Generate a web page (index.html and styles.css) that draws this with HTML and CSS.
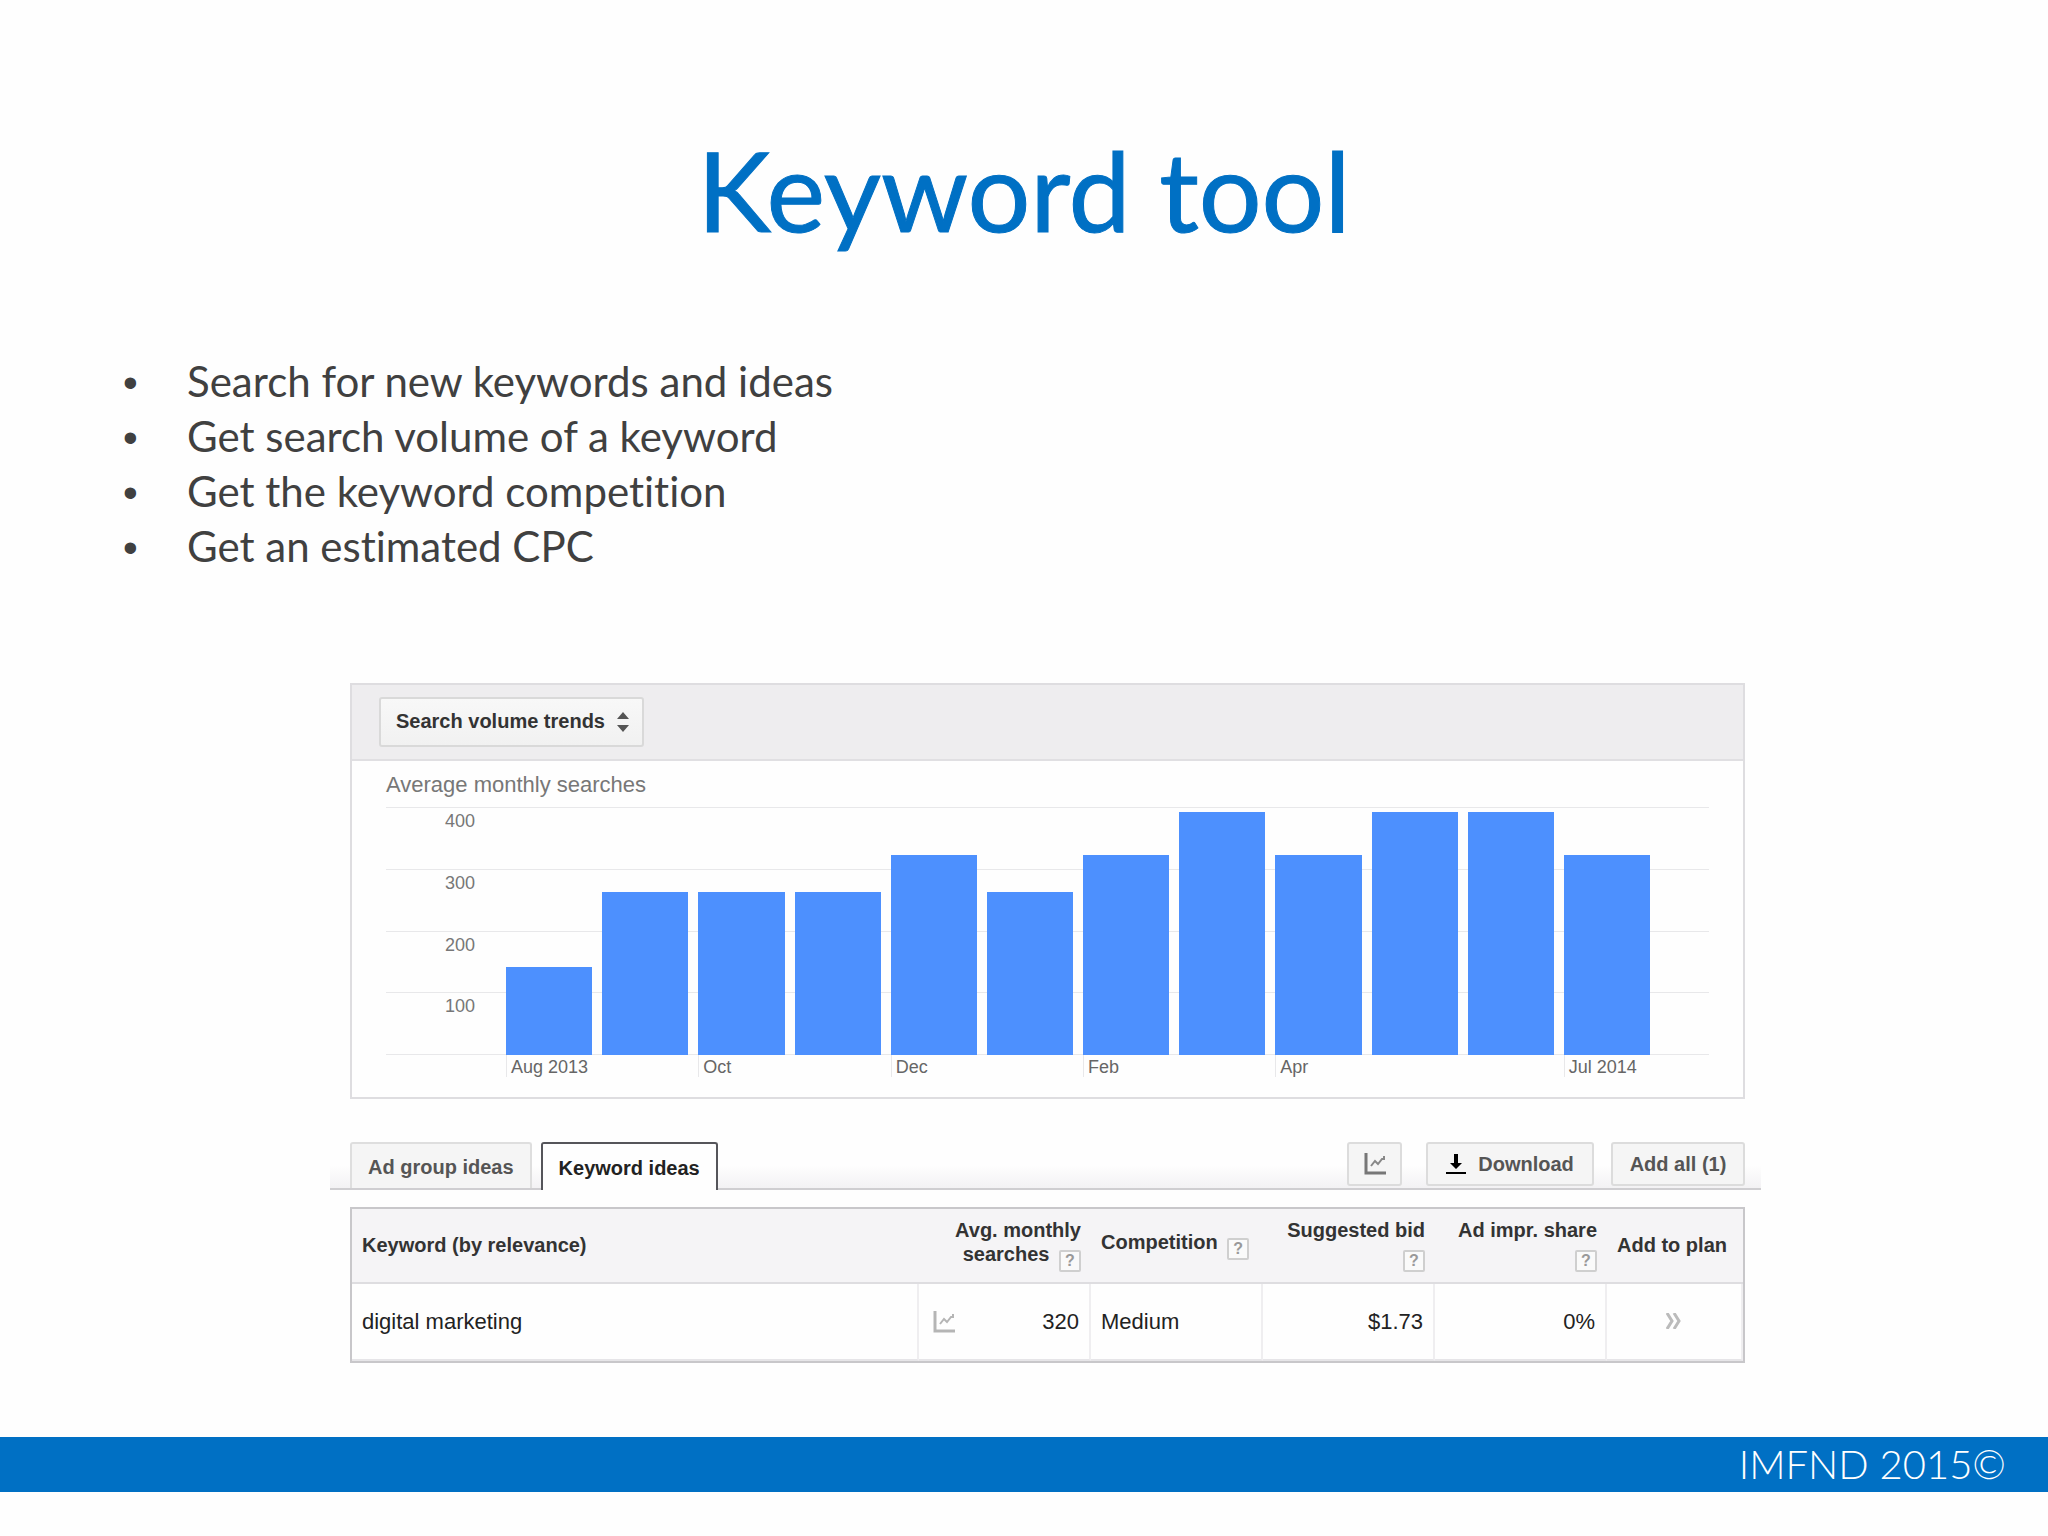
FILE: index.html
```html
<!DOCTYPE html>
<html lang="en">
<head>
    <meta charset="UTF-8">
    <meta name="viewport" content="width=device-width, initial-scale=1.0">
    <title>Keyword tool</title>
    <link rel="stylesheet" href="styles.css">
</head>
<body>

<main class="slide">
    <h1 class="title">Keyword tool</h1>

    <ul class="points">
        <li>Search for new keywords and ideas</li>
        <li>Get search volume of a keyword</li>
        <li>Get the keyword competition</li>
        <li>Get an estimated CPC</li>
    </ul>

    <div class="tool">
        <!-- Chart -->
        <section class="panel">
            <div class="panel-head">
                <div class="picker">
                    <select class="picker-select" aria-label="Chart type">
                        <option>Search volume trends</option>
                    </select>
                    <svg class="picker-arrows" width="12" height="20" viewBox="0 0 12 20">
                        <path d="M6 0L12 7H0zM0 13H12L6 20z" fill="#555"/>
                    </svg>
                </div>
            </div>
            <div class="chart">
                <h2 class="chart-title">Average monthly searches</h2>
                <div class="plot">
                    <div class="grid">
                        <span>400</span>
                        <span>300</span>
                        <span>200</span>
                        <span>100</span>
                    </div>
                    <div class="bars">
                        <div class="bar" style="height: 35.6%"></div>
                        <div class="bar" style="height: 65.6%"></div>
                        <div class="bar" style="height: 65.6%"></div>
                        <div class="bar" style="height: 65.6%"></div>
                        <div class="bar" style="height: 80.8%"></div>
                        <div class="bar" style="height: 65.6%"></div>
                        <div class="bar" style="height: 80.8%"></div>
                        <div class="bar" style="height: 98%"></div>
                        <div class="bar" style="height: 80.8%"></div>
                        <div class="bar" style="height: 98%"></div>
                        <div class="bar" style="height: 98%"></div>
                        <div class="bar" style="height: 80.8%"></div>
                    </div>
                </div>
                <div class="months">
                    <span class="month">Aug 2013</span>
                    <span></span>
                    <span class="month">Oct</span>
                    <span></span>
                    <span class="month">Dec</span>
                    <span></span>
                    <span class="month">Feb</span>
                    <span></span>
                    <span class="month">Apr</span>
                    <span></span>
                    <span></span>
                    <span class="month">Jul 2014</span>
                </div>
            </div>
        </section>

        <!-- Tabs and actions -->
        <div class="tabbar">
            <button type="button" class="tab">Ad group ideas</button>
            <button type="button" class="tab active">Keyword ideas</button>
            <div class="actions">
                <button type="button" class="button button-chart" aria-label="Show chart">
                    <svg width="22" height="22" viewBox="0 0 22 22" fill="none">
                        <path d="M2 0V20H22" stroke="#777" stroke-width="3"/>
                        <path d="M7 13L11 8L14 11L18 6H20V3" stroke="#888" stroke-width="2"/>
                    </svg>
                </button>
                <button type="button" class="button button-download">
                    <svg width="20" height="20" viewBox="0 0 20 20">
                        <path d="M8 0H12V9H16L10 15L4 9H8zM0 18H20V20H0z" fill="#000"/>
                    </svg>
                    Download
                </button>
                <button type="button" class="button button-add">Add all (1)</button>
            </div>
        </div>

        <!-- Results -->
        <table class="results">
            <colgroup>
                <col class="col-keyword">
                <col class="col-data">
                <col class="col-data">
                <col class="col-data">
                <col class="col-data">
                <col class="col-plan">
            </colgroup>
            <thead>
                <tr>
                    <th>Keyword (by relevance)</th>
                    <th class="num">Avg. monthly searches <button type="button" class="help">?</button></th>
                    <th>Competition <button type="button" class="help">?</button></th>
                    <th class="num">Suggested bid <button type="button" class="help">?</button></th>
                    <th class="num">Ad impr. share <button type="button" class="help">?</button></th>
                    <th>Add to plan</th>
                </tr>
            </thead>
            <tbody>
                <tr>
                    <td>digital marketing</td>
                    <td>
                        <div class="volume">
                            <svg width="22" height="22" viewBox="0 0 22 22" fill="none">
                                <path d="M2 0V20H22" stroke="#b5b5b5" stroke-width="3"/>
                                <path d="M7 13L11 8L14 11L18 6H20V3" stroke="#b5b5b5" stroke-width="2"/>
                            </svg>
                            320
                        </div>
                    </td>
                    <td>Medium</td>
                    <td class="num">$1.73</td>
                    <td class="num">0%</td>
                    <td class="plan">
                        <button type="button" class="add" aria-label="Add to plan">
                            <svg width="16" height="16" viewBox="0 0 16 16" fill="none" stroke="#bbb" stroke-width="3">
                                <path d="M1 0L6 8L1 16M8 0L13 8L8 16"/>
                            </svg>
                        </button>
                    </td>
                </tr>
            </tbody>
        </table>
    </div>
</main>

<footer class="footer">IMFND 2015©</footer>

</body>
</html>
```

FILE: styles.css
```css
* {
    box-sizing: border-box;
}
body {
    margin: 0;
    min-height: 100vh;
    display: flex;
    flex-direction: column;
    background: #fefefe;
    color: #404040;
    font-family: "Liberation Sans", Arial, sans-serif;
}
button, select {
    font-family: inherit;
    cursor: pointer;
}
.title {
    margin: 0;
    padding-top: 117px;
    font-family: Lato, Calibri, sans-serif;
    font-size: 111px;
    font-weight: normal;
    line-height: 144px;
    text-align: center;
    color: #0070c4;
    -webkit-text-stroke: 1px #0070c4;
}
.points {
    margin: 93px 0 0;
    padding: 0 0 0 187px;
    list-style: none;
    font-family: Lato, Calibri, sans-serif;
    font-size: 42px;
    line-height: 55px;
    font-variant-ligatures: none;
}
.points li::before {
    content: "•";
    display: inline-block;
    width: 64px;
    margin-left: -64px;
    font-family: "Liberation Sans", Arial, sans-serif;
    line-height: 50px;
}
.tool {
    margin: 109px 303px 0 350px;
}

/* Chart */
.panel {
    border: 2px solid #dedde0;
}
.panel-head {
    padding: 12px 27px;
    background: #eeedef;
    border-bottom: 2px solid #e0dfe2;
}
.picker {
    position: relative;
    display: inline-block;
    vertical-align: top;
}
.picker-select {
    appearance: none;
    display: block;
    width: 265px;
    height: 50px;
    padding: 0 15px 2px;
    border: 2px solid #d9d9d9;
    border-radius: 3px;
    background: linear-gradient(#f8f8f8, #f1f1f1);
    color: #333;
    font-size: 20px;
    font-weight: bold;
}
.picker-arrows {
    position: absolute;
    right: 15px;
    top: 15px;
    pointer-events: none;
}
.chart {
    padding: 10px 34px 20px;
}
.chart-title {
    margin: 0 0 8px;
    font-size: 22px;
    font-weight: normal;
    line-height: 28px;
    color: #777;
}
.plot {
    display: grid;
    height: 248px;
}
.grid, .bars {
    grid-area: 1 / 1;
}
.grid {
    display: flex;
    flex-direction: column;
    border-bottom: 1px solid #e8e8ea;
}
.grid span {
    flex: 1;
    padding: 3px 0 0 59px;
    border-top: 1px solid #e8e8ea;
    font-size: 18px;
    line-height: 20px;
    color: #777;
}
.bars {
    display: flex;
    align-items: flex-end;
    gap: 10px;
    margin: 0 59px 0 120px;
}
.bar {
    flex: 1;
    background: #4d90fe;
}
.months {
    display: grid;
    grid-template-columns: repeat(12, minmax(0, 1fr));
    gap: 10px;
    margin: 0 59px 0 120px;
}
.month {
    padding: 2px 0 0 4px;
    border-left: 1px solid #e8e8ea;
    font-size: 18px;
    line-height: 20px;
    white-space: nowrap;
    color: #666;
}

/* Tabs and actions */
.tabbar {
    display: flex;
    align-items: flex-end;
    gap: 9px;
    margin: 43px -16px 17px -20px;
    padding: 0 16px 0 20px;
    border-bottom: 2px solid #cfced1;
    background: linear-gradient(#fefefe 50%, #f3f2f4);
}
.tab {
    height: 46px;
    padding: 2px 16px 0;
    border: 2px solid #dedede;
    border-bottom: none;
    border-radius: 3px 3px 0 0;
    background: #f5f5f5;
    color: #555;
    font-size: 20px;
    font-weight: bold;
}
.tab.active {
    height: 48px;
    margin-bottom: -2px;
    border-color: #55555a;
    background: #fefefe;
    color: #222;
}
.actions {
    display: flex;
    margin: 0 0 2px auto;
}
.button {
    display: flex;
    align-items: center;
    justify-content: center;
    height: 44px;
    padding: 0;
    border: 2px solid #dcdcdc;
    border-radius: 3px;
    background: #f5f5f5;
    color: #555;
    font-size: 20px;
    font-weight: bold;
}
.button-chart {
    width: 55px;
}
.button-download {
    width: 168px;
    margin: 0 17px 0 24px;
    gap: 12px;
}
.button-add {
    width: 134px;
}

/* Results */
.results {
    width: 100%;
    table-layout: fixed;
    border-collapse: separate;
    border-spacing: 0;
    border: 2px solid #c8c7ca;
}
.col-data {
    width: 172px;
}
.col-plan {
    width: 136px;
}
.results th {
    height: 75px;
    padding: 0 10px 2px;
    border-bottom: 2px solid #dedde0;
    background: #f5f4f6;
    color: #333;
    font-size: 20px;
    line-height: 24px;
    text-align: left;
}
.results td {
    height: 77px;
    padding: 0 10px;
    border-right: 2px solid #efeef0;
    border-bottom: 2px solid #e6e5e8;
    color: #222;
    font-size: 22px;
}
.results .num {
    text-align: right;
}
.results .plan {
    text-align: center;
}
.help {
    width: 22px;
    height: 22px;
    margin-left: 4px;
    padding: 0;
    border: 2px solid #cfcfcf;
    border-radius: 2px;
    background: #fafafa;
    color: #999;
    font-size: 16px;
    font-weight: bold;
    line-height: 16px;
    vertical-align: -5px;
}
.volume {
    display: flex;
    align-items: center;
    justify-content: space-between;
    padding-left: 4px;
}
.add {
    padding: 0;
    border: none;
    background: none;
}

.footer {
    margin: auto 0 44px;
    padding-right: 42px;
    background: #0070c4;
    color: #fff;
    font-family: Lato, Calibri, sans-serif;
    font-size: 40px;
    font-weight: 300;
    line-height: 55px;
    text-align: right;
}
```
